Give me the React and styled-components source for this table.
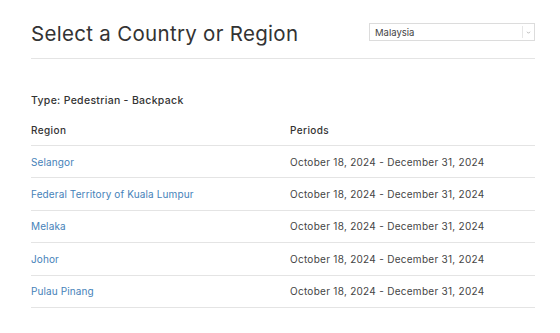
import React from 'react';
import styled, { createGlobalStyle } from 'styled-components';

const colors = {
  text: '#333333',
  body: '#444444',
  link: '#4682b9',
  line: '#e4e4e4',
  border: '#dcdcdc',
};

const GlobalStyle = createGlobalStyle`
  html, body {
    margin: 0;
    padding: 0;
    background: #fff;
  }
  body {
    font-family: Inter, "Noto Sans", "Liberation Sans", sans-serif;
    color: ${colors.text};
    -webkit-font-smoothing: antialiased;
  }
`;

const Page = styled.div`
  width: 560px;
  height: 333px;
  box-sizing: border-box;
  padding: 0 25px 0 31px;
  overflow: hidden;
`;

const Header = styled.header`
  display: flex;
  justify-content: space-between;
  align-items: flex-start;
  height: 58px;
  border-bottom: 1px solid ${colors.line};
`;

const Title = styled.h1`
  margin: 22px 0 0;
  font-size: 20.5px;
  line-height: 24px;
  font-weight: 400;
  letter-spacing: 0.3px;
  color: ${colors.text};
`;

const Select = styled.div`
  margin-top: 23px;
  width: 166px;
  height: 18px;
  box-sizing: border-box;
  border: 1px solid ${colors.border};
  display: flex;
  align-items: center;
  font-size: 9.5px;
  color: #444;

  span {
    flex: 1;
    padding-left: 5px;
  }
`;

const Caret = styled.div`
  width: 11px;
  height: 12px;
  border-left: 1px solid #e6e6e6;
  display: flex;
  align-items: center;
  justify-content: center;

  svg {
    width: 5px;
    height: 5px;
  }
`;

const Type = styled.div`
  margin: 35px 0 6px;
  font-size: 10.5px;
  line-height: 14px;
  font-weight: 500;
  letter-spacing: 0.3px;
  color: ${colors.text};
`;

const Row = styled.div`
  display: grid;
  grid-template-columns: 259px 1fr;
  align-items: center;
  height: ${p => (p.head ? '32px' : '32.4px')};
  box-sizing: border-box;
  border-bottom: 1px solid ${colors.line};
  font-size: 10px;
  font-weight: ${p => (p.head ? 500 : 400)};
  letter-spacing: ${p => (p.head ? '0.4px' : '0.28px')};
  color: ${p => (p.head ? colors.text : colors.body)};
`;

const RegionLink = styled.a`
  color: ${colors.link};
  text-decoration: none;
  letter-spacing: 0.12px;
`;

const rows = [
  'Selangor',
  'Federal Territory of Kuala Lumpur',
  'Melaka',
  'Johor',
  'Pulau Pinang',
];

export default function App() {
  return (
    <Page>
      <GlobalStyle />
      <Header>
        <Title>Select a Country or Region</Title>
        <Select>
          <span>Malaysia</span>
          <Caret>
            <svg viewBox="0 0 10 10">
              <path d="M2 3.5 L5 6.5 L8 3.5" fill="none" stroke="#999" strokeWidth="1.4" />
            </svg>
          </Caret>
        </Select>
      </Header>
      <Type>Type: Pedestrian - Backpack</Type>
      <Row head>
        <div>Region</div>
        <div>Periods</div>
      </Row>
      {rows.map(r => (
        <Row key={r}>
          <RegionLink href="#">{r}</RegionLink>
          <div>October 18, 2024 - December 31, 2024</div>
        </Row>
      ))}
    </Page>
  );
}
